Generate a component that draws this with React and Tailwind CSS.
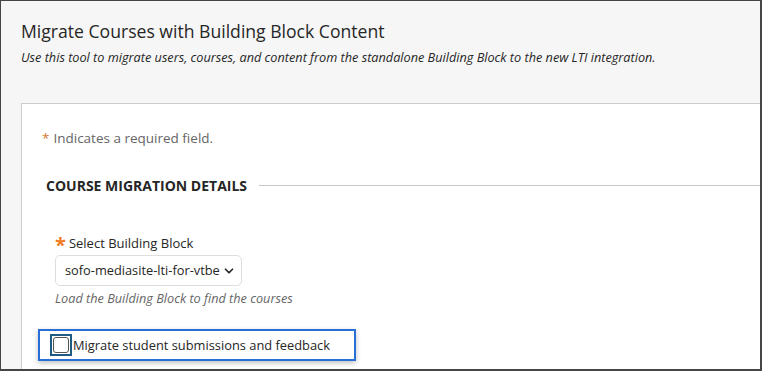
import { ChevronDown } from 'lucide-react';

export default function App() {
  return (
    <div
      className="w-[762px] h-[371px] overflow-hidden bg-[#f6f6f6] border-t border-l border-r-2 border-b-2 border-[#454545] text-[#262626]"
      style={{ fontFamily: '"Open Sans", "Noto Sans", sans-serif' }}
    >
      {/* Page header */}
      <div className="pl-[20px] pt-[17px]">
        <h1 className="text-[17.6px] leading-[26px] text-[#262626]">Migrate Courses with Building Block Content</h1>
        <p className="mt-[5px] text-[12.7px] leading-[16px] italic text-[#262626] whitespace-nowrap">
          Use this tool to migrate users, courses, and content from the standalone Building Block to the new LTI integration.
        </p>
      </div>

      {/* Form panel */}
      <div className="ml-[20px] mt-[38px] bg-white border-t border-l border-[#cdcdcd] h-[280px]">
        <p className="pl-[20px] pt-[24px] text-[13.5px] leading-[20px] text-[#666]">
          <span className="text-[#d9782e] mr-[4px]">*</span>Indicates a required field.
        </p>

        <div className="flex items-center mt-[28px] pl-[24px]">
          <h2 className="text-[14px] font-bold text-[#262626] leading-[20px]">COURSE MIGRATION DETAILS</h2>
          <div className="flex-1 h-px bg-[#c8c8c8] ml-[12px] mt-[-1px]" />
        </div>

        <div className="pl-[33px] mt-[38px]">
          <label className="flex items-center text-[13px] leading-[18px] text-[#262626]">
            <span className="text-[#ef7d1f] text-[20px] font-bold leading-[14px] mr-[3px] mt-[4px]">*</span>
            Select Building Block
          </label>
          <div className="mt-[3px] w-[187px] h-[31px] border border-[#dedede] rounded-[5px] flex items-center justify-between pl-[9px] pr-[5px]">
            <span className="text-[12.8px] text-[#262626] whitespace-nowrap">sofo-mediasite-lti-for-vtbe</span>
            <ChevronDown size={14} strokeWidth={3} className="text-[#262626]" />
          </div>
          <p className="mt-[3px] text-[12.7px] leading-[18px] italic text-[#666] whitespace-nowrap">Load the Building Block to find the courses</p>
        </div>

        <div className="ml-[16px] mt-[22px] w-[318px] h-[32px] border-2 border-[#2a6fd6] shadow-[0_2px_5px_rgba(0,0,0,0.25)] flex items-center pl-[10px]">
          <span className="w-[22px] h-[22px] border-2 border-[#1d5b86] flex items-center justify-center">
            <span className="w-[16px] h-[16px] border border-[#555] rounded-[3px] bg-white" />
          </span>
          <span className="ml-[1px] text-[12.85px] text-[#262626] leading-[20px] whitespace-nowrap">Migrate student submissions and feedback</span>
        </div>
      </div>
    </div>
  );
}
